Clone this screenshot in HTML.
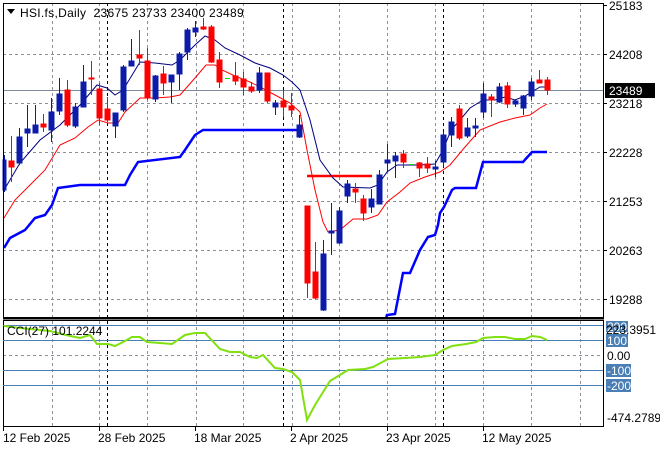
<!DOCTYPE html>
<html><head><meta charset="utf-8"><style>
html,body{margin:0;padding:0;background:#fff;}
svg{display:block;font-family:"Liberation Sans",Tahoma,sans-serif;}
</style></head><body>
<svg width="660" height="450" viewBox="0 0 660 450" xmlns="http://www.w3.org/2000/svg">
<rect width="660" height="450" fill="#fff"/>
<g stroke="#8a8f98" stroke-width="1" stroke-dasharray="3,3">
<line x1="3" y1="54.5" x2="603" y2="54.5"/>
<line x1="3" y1="103.5" x2="603" y2="103.5"/>
<line x1="3" y1="152.5" x2="603" y2="152.5"/>
<line x1="3" y1="201.5" x2="603" y2="201.5"/>
<line x1="3" y1="250.5" x2="603" y2="250.5"/>
<line x1="3" y1="299.5" x2="603" y2="299.5"/>
<line x1="3" y1="355.5" x2="603" y2="355.5"/>
<line x1="52.5" y1="3" x2="52.5" y2="318"/><line x1="99.5" y1="3" x2="99.5" y2="318"/>
<line x1="147.5" y1="3" x2="147.5" y2="318"/><line x1="196.5" y1="3" x2="196.5" y2="318"/>
<line x1="243.5" y1="3" x2="243.5" y2="318"/><line x1="292.5" y1="3" x2="292.5" y2="318"/>
<line x1="339.5" y1="3" x2="339.5" y2="318"/><line x1="387.5" y1="3" x2="387.5" y2="318"/>
<line x1="435.5" y1="3" x2="435.5" y2="318"/><line x1="483.5" y1="3" x2="483.5" y2="318"/>
<line x1="531.5" y1="3" x2="531.5" y2="318"/><line x1="580.5" y1="3" x2="580.5" y2="318"/>
<line x1="52.5" y1="321" x2="52.5" y2="426"/><line x1="99.5" y1="321" x2="99.5" y2="426"/>
<line x1="147.5" y1="321" x2="147.5" y2="426"/><line x1="196.5" y1="321" x2="196.5" y2="426"/>
<line x1="243.5" y1="321" x2="243.5" y2="426"/><line x1="292.5" y1="321" x2="292.5" y2="426"/>
<line x1="339.5" y1="321" x2="339.5" y2="426"/><line x1="387.5" y1="321" x2="387.5" y2="426"/>
<line x1="435.5" y1="321" x2="435.5" y2="426"/><line x1="483.5" y1="321" x2="483.5" y2="426"/>
<line x1="531.5" y1="321" x2="531.5" y2="426"/><line x1="580.5" y1="321" x2="580.5" y2="426"/>
</g>
<g stroke="#000" stroke-width="1" stroke-dasharray="3,3">
<line x1="107.5" y1="3" x2="107.5" y2="426"/>
<line x1="283.5" y1="3" x2="283.5" y2="426"/>
<line x1="443.5" y1="3" x2="443.5" y2="426"/>
</g>
<line x1="3" y1="90.5" x2="603" y2="90.5" stroke="#7f8b99" stroke-width="1"/>
<polyline fill="none" stroke="#0000ff" stroke-width="2.5" points="4,248 10,238 25,230 35,218 45,215 52,205 58,188 80,185 125,185 130,175 138,162 180,157 185,150 195,135 203,130 300,130"/>
<polyline fill="none" stroke="#0000ff" stroke-width="2.5" points="386,318 387,315 395,314 403,273 410,273 420,250 428,237 435,235 438,225 440,213 444,207 452,190 455,188 466,188 476,188 483,162 523,162 532,152 547,152"/>
<line x1="307" y1="176" x2="372" y2="176" stroke="#ff0000" stroke-width="2.5"/>
<polyline fill="none" stroke="#ff0000" stroke-width="1" points="4,218 15,200 30,185 45,170 60,145 75,138 88,127 98,120 108,123 118,123 125,112 140,98 155,98 170,97 180,95 195,78 206,65 215,65 222,70 235,76 250,82 262,88 275,95 290,103 300,112 307,150 315,190 323,222 328,232 340,230 353,219 367,219 378,215 387,202 400,192 410,183 425,177 440,172 450,165 465,147 480,130 500,122 515,118 530,115 540,108 547,104"/>
<polyline fill="none" stroke="#000080" stroke-width="1" points="4,190 20,163 40,140 60,125 80,105 97,85 107,88 115,95 123,90 140,62 155,63 172,65 180,60 195,45 205,36 215,40 225,48 240,55 255,63 270,68 283,75 292,82 300,90 310,120 320,160 333,178 343,187 370,188 378,185 387,172 397,165 420,165 435,164 443,150 451,130 460,120 470,108 483,100 495,100 505,97 515,100 525,96 535,90 540,87 547,87"/>
<g stroke-width="1">
<g stroke="#0d1ca8" fill="#0d1ca8">
<line x1="4.5" y1="155" x2="4.5" y2="192"/><rect x="3" y="160" width="3" height="30"/>
<line x1="19.5" y1="128" x2="19.5" y2="165"/><rect x="17" y="137" width="5" height="26"/>
<line x1="27.5" y1="105" x2="27.5" y2="147"/><rect x="25" y="129" width="5" height="4"/>
<line x1="35.5" y1="105" x2="35.5" y2="133"/><rect x="33" y="125" width="5" height="8"/>
<line x1="51.5" y1="98" x2="51.5" y2="142"/><rect x="49" y="112" width="5" height="18"/>
<line x1="59.5" y1="78" x2="59.5" y2="115"/><rect x="57" y="94" width="5" height="17"/>
<line x1="75.5" y1="103" x2="75.5" y2="128"/><rect x="73" y="107" width="5" height="19"/>
<line x1="83.5" y1="65" x2="83.5" y2="107"/><rect x="81" y="82" width="5" height="25"/>
<line x1="115.5" y1="113" x2="115.5" y2="138"/><rect x="113" y="113" width="5" height="13"/>
<line x1="123.5" y1="65" x2="123.5" y2="112"/><rect x="121" y="67" width="5" height="43"/>
<line x1="131.5" y1="39" x2="131.5" y2="66"/><rect x="129" y="61" width="5" height="5"/>
<line x1="155.5" y1="75" x2="155.5" y2="102"/><rect x="153" y="76" width="5" height="23"/>
<line x1="171.5" y1="75" x2="171.5" y2="103"/><rect x="169" y="75" width="5" height="7"/>
<line x1="179.5" y1="52" x2="179.5" y2="90"/><rect x="177" y="54" width="5" height="20"/>
<line x1="187.5" y1="28" x2="187.5" y2="60"/><rect x="185" y="30" width="5" height="22"/>
<line x1="195.5" y1="21" x2="195.5" y2="37"/><rect x="193" y="28" width="5" height="4"/>
<line x1="259.5" y1="67" x2="259.5" y2="93"/><rect x="257" y="73" width="5" height="17"/>
<line x1="275.5" y1="100" x2="275.5" y2="115"/><rect x="273" y="103" width="5" height="4"/>
<line x1="299.5" y1="115" x2="299.5" y2="138"/><rect x="297" y="125" width="5" height="12"/>
<line x1="323.5" y1="240" x2="323.5" y2="311"/><rect x="321" y="254" width="5" height="56"/>
<line x1="331.5" y1="203" x2="331.5" y2="255"/><rect x="329" y="231" width="5" height="2"/>
<line x1="339.5" y1="207" x2="339.5" y2="244"/><rect x="337" y="211" width="5" height="32"/>
<line x1="347.5" y1="180" x2="347.5" y2="203"/><rect x="345" y="184" width="5" height="12"/>
<line x1="371.5" y1="189" x2="371.5" y2="213"/><rect x="369" y="199" width="5" height="8"/>
<line x1="379.5" y1="170" x2="379.5" y2="204"/><rect x="377" y="175" width="5" height="29"/>
<line x1="387.5" y1="144" x2="387.5" y2="172"/><rect x="385" y="160" width="5" height="3"/>
<line x1="395.5" y1="152" x2="395.5" y2="178"/><rect x="393" y="156" width="5" height="5"/>
<line x1="435.5" y1="161" x2="435.5" y2="177"/><rect x="433" y="167" width="5" height="2"/>
<line x1="443.5" y1="132" x2="443.5" y2="167"/><rect x="441" y="135" width="5" height="27"/>
<line x1="451.5" y1="117" x2="451.5" y2="147"/><rect x="449" y="122" width="5" height="13"/>
<line x1="467.5" y1="118" x2="467.5" y2="138"/><rect x="465" y="128" width="5" height="8"/>
<line x1="475.5" y1="118" x2="475.5" y2="137"/><rect x="473" y="126" width="5" height="2"/>
<line x1="483.5" y1="83" x2="483.5" y2="118"/><rect x="481" y="94" width="5" height="18"/>
<line x1="499.5" y1="83" x2="499.5" y2="103"/><rect x="497" y="87" width="5" height="15"/>
<line x1="515.5" y1="99" x2="515.5" y2="107"/><rect x="513" y="101" width="5" height="3"/>
<line x1="523.5" y1="95" x2="523.5" y2="115"/><rect x="521" y="96" width="5" height="12"/>
<line x1="531.5" y1="78" x2="531.5" y2="100"/><rect x="529" y="82" width="5" height="14"/>
</g>
<g stroke="#ff0000" fill="#ff0000">
<line x1="11.5" y1="136" x2="11.5" y2="182"/><rect x="9" y="161" width="5" height="6"/>
<line x1="43.5" y1="114" x2="43.5" y2="132"/><rect x="41" y="124" width="5" height="3"/>
<line x1="67.5" y1="80" x2="67.5" y2="127"/><rect x="65" y="90" width="5" height="35"/>
<line x1="91.5" y1="61" x2="91.5" y2="95"/><rect x="89" y="78" width="5" height="1"/>
<line x1="99.5" y1="83" x2="99.5" y2="125"/><rect x="97" y="89" width="5" height="29"/>
<line x1="107.5" y1="97" x2="107.5" y2="122"/><rect x="105" y="109" width="5" height="11"/>
<line x1="139.5" y1="30" x2="139.5" y2="65"/><rect x="137" y="55" width="5" height="3"/>
<line x1="147.5" y1="48" x2="147.5" y2="100"/><rect x="145" y="61" width="5" height="37"/>
<line x1="163.5" y1="66" x2="163.5" y2="95"/><rect x="161" y="74" width="5" height="9"/>
<line x1="203.5" y1="18" x2="203.5" y2="30"/><rect x="201" y="27" width="5" height="2"/>
<line x1="211.5" y1="25" x2="211.5" y2="63"/><rect x="209" y="27" width="5" height="35"/>
<line x1="219.5" y1="52" x2="219.5" y2="88"/><rect x="217" y="60" width="5" height="22"/>
<line x1="235.5" y1="62" x2="235.5" y2="85"/><rect x="233" y="76" width="5" height="5"/>
<line x1="243.5" y1="72" x2="243.5" y2="95"/><rect x="241" y="79" width="5" height="8"/>
<line x1="251.5" y1="82" x2="251.5" y2="93"/><rect x="249" y="87" width="5" height="4"/>
<line x1="267.5" y1="73" x2="267.5" y2="103"/><rect x="265" y="73" width="5" height="28"/>
<line x1="283.5" y1="90" x2="283.5" y2="117"/><rect x="281" y="101" width="5" height="6"/>
<line x1="291.5" y1="93" x2="291.5" y2="117"/><rect x="289" y="106" width="5" height="4"/>
<line x1="307.5" y1="206" x2="307.5" y2="298"/><rect x="305" y="206" width="5" height="77"/>
<line x1="315.5" y1="242" x2="315.5" y2="299"/><rect x="313" y="272" width="5" height="26"/>
<line x1="355.5" y1="183" x2="355.5" y2="203"/><rect x="353" y="189" width="5" height="3"/>
<line x1="363.5" y1="195" x2="363.5" y2="221"/><rect x="361" y="199" width="5" height="14"/>
<line x1="403.5" y1="150" x2="403.5" y2="168"/><rect x="401" y="154" width="5" height="8"/>
<line x1="419.5" y1="162" x2="419.5" y2="177"/><rect x="417" y="163" width="5" height="5"/>
<line x1="427.5" y1="157" x2="427.5" y2="173"/><rect x="425" y="164" width="5" height="4"/>
<line x1="459.5" y1="105" x2="459.5" y2="140"/><rect x="457" y="109" width="5" height="29"/>
<line x1="491.5" y1="94" x2="491.5" y2="117"/><rect x="489" y="97" width="5" height="3"/>
<line x1="507.5" y1="82" x2="507.5" y2="108"/><rect x="505" y="86" width="5" height="18"/>
<line x1="539.5" y1="70" x2="539.5" y2="83"/><rect x="537" y="80" width="5" height="3"/>
<line x1="547.5" y1="77" x2="547.5" y2="95"/><rect x="545" y="80" width="5" height="10"/>
</g>
<line x1="225" y1="78.5" x2="230" y2="78.5" stroke="#00e000"/>
<line x1="409" y1="164.5" x2="414" y2="164.5" stroke="#00e000"/>
</g>
<polygon points="7,9 15,9 11,14" fill="#000"/>
<text x="20" y="17" font-size="12" fill="#000" style="white-space:pre" letter-spacing="0.3">HSI.fs,Daily  23675 23733 23400 23489</text>
<rect x="3.5" y="3.5" width="600" height="314" fill="none" stroke="#000"/>
<line x1="3" y1="318.5" x2="604" y2="318.5" stroke="#000" stroke-width="2"/>
<rect x="3.5" y="320.5" width="600" height="106" fill="none" stroke="#000"/>
<g font-size="12" fill="#000">
<text x="609" y="10">25183</text>
<text x="609" y="59">24208</text>
<text x="609" y="108">23218</text>
<text x="609" y="157">22228</text>
<text x="609" y="206">21253</text>
<text x="609" y="255">20263</text>
<text x="609" y="304">19288</text>
</g>
<g stroke="#000"><line x1="603" y1="5.5" x2="607" y2="5.5"/><line x1="603" y1="54.5" x2="607" y2="54.5"/><line x1="603" y1="103.5" x2="607" y2="103.5"/><line x1="603" y1="152.5" x2="607" y2="152.5"/><line x1="603" y1="201.5" x2="607" y2="201.5"/><line x1="603" y1="250.5" x2="607" y2="250.5"/><line x1="603" y1="299.5" x2="607" y2="299.5"/></g>
<rect x="605" y="83" width="50" height="15" fill="#000"/>
<text x="609" y="95" font-size="12" fill="#fff">23489</text>
<g stroke="#4a7fb5" stroke-width="1">
<line x1="3" y1="325.5" x2="603" y2="325.5"/>
<line x1="3" y1="340.5" x2="603" y2="340.5"/>
<line x1="3" y1="370.5" x2="603" y2="370.5"/>
<line x1="3" y1="385.5" x2="603" y2="385.5"/>
</g>
<polyline fill="none" stroke="#80e010" stroke-width="2" points="4,326 20,328 50,331 70,336 80,338 90,335 97,344 108,344 115,346 125,341 132,337 140,337 147,342 160,343 172,344 185,335 195,333 205,333 220,349 230,352 240,352 250,357 257,358 263,355 275,368 283,369 292,372 300,380 307,420 315,405 330,381 348,370 365,369 373,367 388,359 405,358 420,357 435,355 443,350 452,346 466,344 476,342 483,338 495,337 505,337 515,339 525,339 532,336 540,337 547,340"/>
<text x="7" y="335" font-size="12" fill="#000">CCI(27) 101.2244</text>
<g font-size="12">
<rect x="606" y="321" width="22" height="11" fill="#4a7fb5"/>
<text x="607" y="331" fill="#fff">200</text>
<text x="606" y="334" fill="#000">223.3951</text>
<rect x="606" y="334" width="22" height="13" fill="#4a7fb5"/>
<text x="607" y="345" fill="#fff">100</text>
<text x="607" y="360" fill="#000">0.00</text>
<rect x="606" y="364" width="25" height="13" fill="#4a7fb5"/>
<text x="607" y="375" fill="#fff">-100</text>
<rect x="606" y="379" width="25" height="13" fill="#4a7fb5"/>
<text x="607" y="390" fill="#fff">-200</text>
<text x="607" y="422" fill="#000">-474.2789</text>
</g>
<g stroke="#000"><line x1="3.5" y1="427" x2="3.5" y2="431"/><line x1="99.5" y1="427" x2="99.5" y2="431"/><line x1="195.5" y1="427" x2="195.5" y2="431"/><line x1="291.5" y1="427" x2="291.5" y2="431"/><line x1="387.5" y1="427" x2="387.5" y2="431"/><line x1="483.5" y1="427" x2="483.5" y2="431"/></g>
<g font-size="12" fill="#000">
<text x="3" y="442">12 Feb 2025</text>
<text x="98" y="442">28 Feb 2025</text>
<text x="194" y="442">18 Mar 2025</text>
<text x="290" y="442">2 Apr 2025</text>
<text x="386" y="442">23 Apr 2025</text>
<text x="482" y="442">12 May 2025</text>
</g>
</svg>
</body></html>
